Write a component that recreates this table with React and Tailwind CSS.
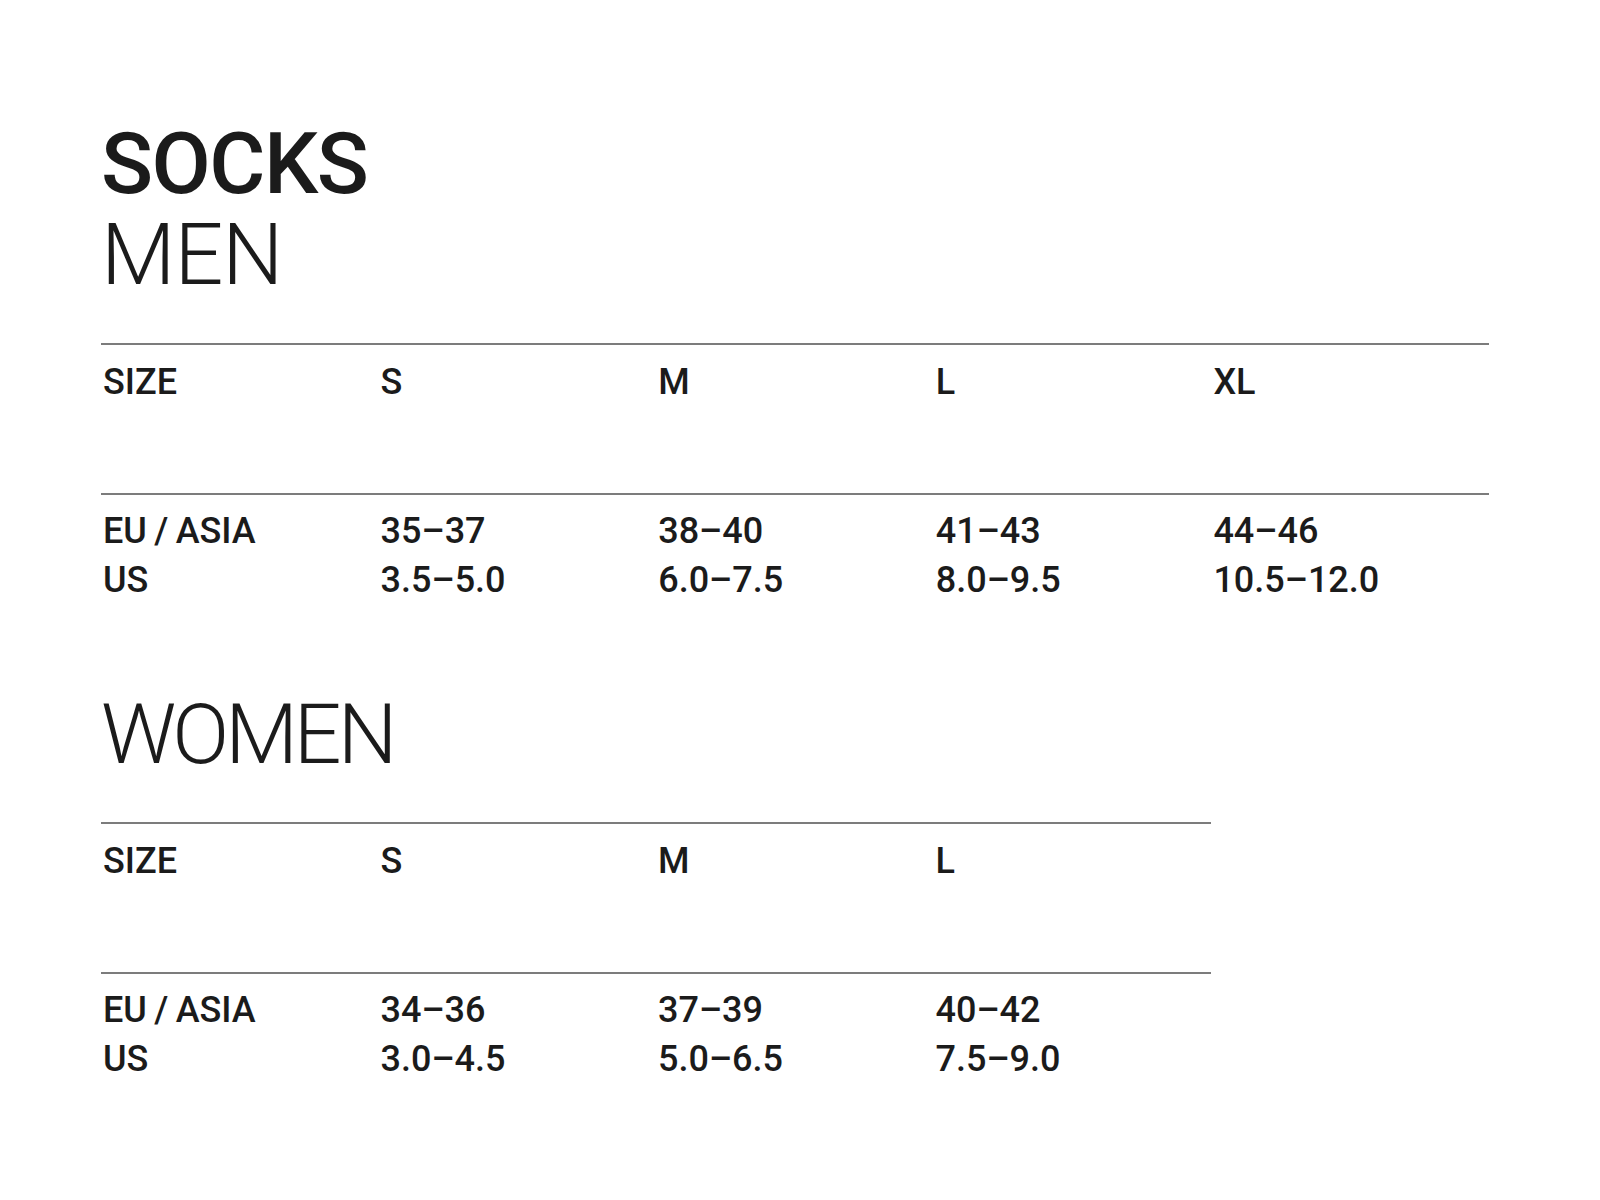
import React from "react";

const men = {
  sizes: ["S", "M", "L", "XL"],
  eu: ["35–37", "38–40", "41–43", "44–46"],
  us: ["3.5–5.0", "6.0–7.5", "8.0–9.5", "10.5–12.0"],
};
const women = {
  sizes: ["S", "M", "L"],
  eu: ["34–36", "37–39", "40–42"],
  us: ["3.0–4.5", "5.0–6.5", "7.5–9.0"],
};

function Table({ data, cols, width }) {
  const gridCls = cols === 5 ? "grid grid-cols-5" : "grid grid-cols-4";
  return (
    <div className={width}>
      <div className={`${gridCls} border-t-2 border-[#7c7c7c] pt-[13px] h-[150px]`}>
        <div className="pl-[2px] font-medium text-[36px] leading-[48px]">SIZE</div>
        {data.sizes.map((s) => (
          <div key={s} className="pl-[2px] font-medium text-[36px] leading-[48px]">{s}</div>
        ))}
      </div>
      <div className={`${gridCls} border-t-2 border-[#7c7c7c] pt-[12px]`}>
        <div className="pl-[2px] font-medium text-[36px] leading-[49px]">
          <div>EU{"\u2009"}/{"\u2009"}ASIA</div>
          <div>US</div>
        </div>
        {data.eu.map((e, i) => (
          <div key={e} className="pl-[2px] font-medium text-[36px] leading-[49px]">
            <div>{e}</div>
            <div>{data.us[i]}</div>
          </div>
        ))}
      </div>
    </div>
  );
}

export default function App() {
  return (
    <div
      className="w-[1600px] h-[1200px] bg-white text-[#1b1b1b] pl-[101px] pt-[118px]"
      style={{ fontFamily: "Roboto, 'Noto Sans', sans-serif" }}
    >
      <div className="text-[86px] leading-[91px] font-medium tracking-[-1.5px]">SOCKS</div>
      <div className="text-[86px] leading-[91px] font-light tracking-[-1px]">MEN</div>
      <div className="mt-[43px]">
        <Table data={men} cols={5} width="w-[1388px]" />
      </div>
      <div className="mt-[84px] text-[84px] leading-[91px] font-light tracking-[-4px]">WOMEN</div>
      <div className="mt-[42px]">
        <Table data={women} cols={4} width="w-[1110px]" />
      </div>
    </div>
  );
}
